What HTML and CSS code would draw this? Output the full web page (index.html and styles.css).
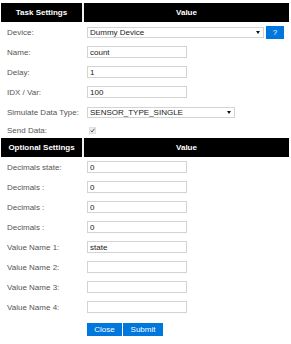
FILE: index.html
```html
<!DOCTYPE html>
<html lang="en">
<head>
    <meta charset="UTF-8">
    <meta name="viewport" content="width=device-width, initial-scale=1.0">
    <title>Task Settings</title>
    <link rel="stylesheet" href="styles.css">
</head>
<body>
    <form class="task-form">
        <table class="settings">
            <colgroup>
                <col class="col-label">
                <col>
            </colgroup>
            <tr>
                <th>Task Settings</th>
                <th>Value</th>
            </tr>
            <tr>
                <td>Device:</td>
                <td>
                    <div class="device-row">
                        <span class="select-wrap device-select">
                            <select name="device">
                                <option>Dummy Device</option>
                            </select>
                        </span>
                        <a class="help-btn" href="#">?</a>
                    </div>
                </td>
            </tr>
            <tr>
                <td>Name:</td>
                <td><input type="text" name="name" value="count"></td>
            </tr>
            <tr>
                <td>Delay:</td>
                <td><input type="text" name="delay" value="1"></td>
            </tr>
            <tr>
                <td>IDX / Var:</td>
                <td><input type="text" name="idx" value="100"></td>
            </tr>
            <tr>
                <td>Simulate Data Type:</td>
                <td>
                    <span class="select-wrap type-select">
                        <select name="type">
                            <option>SENSOR_TYPE_SINGLE</option>
                        </select>
                    </span>
                </td>
            </tr>
            <tr class="check-row">
                <td>Send Data:</td>
                <td><span class="check-box"><svg width="5" height="5" viewBox="0 0 5 5"><path d="M0.6 2.6 L2 4 L4.4 0.8" fill="none" stroke="#555" stroke-width="1"/></svg></span></td>
            </tr>
            <tr>
                <th>Optional Settings</th>
                <th>Value</th>
            </tr>
            <tr>
                <td>Decimals state:</td>
                <td><input type="text" value="0"></td>
            </tr>
            <tr>
                <td>Decimals :</td>
                <td><input type="text" value="0"></td>
            </tr>
            <tr>
                <td>Decimals :</td>
                <td><input type="text" value="0"></td>
            </tr>
            <tr>
                <td>Decimals :</td>
                <td><input type="text" value="0"></td>
            </tr>
            <tr>
                <td>Value Name 1:</td>
                <td><input type="text" value="state"></td>
            </tr>
            <tr>
                <td>Value Name 2:</td>
                <td><input type="text" value=""></td>
            </tr>
            <tr>
                <td>Value Name 3:</td>
                <td><input type="text" value=""></td>
            </tr>
            <tr>
                <td>Value Name 4:</td>
                <td><input type="text" value=""></td>
            </tr>
            <tr class="button-row">
                <td></td>
                <td>
                    <a class="button button-close" href="#">Close</a><button type="button" class="button button-submit">Submit</button>
                </td>
            </tr>
        </table>
    </form>
</body>
</html>
```

FILE: styles.css
```css
:root {
    --text-color: #555;
    --border-color: #d3d3d3;
    --button-color: #0077dd;
}

body {
    font-family: 'Liberation Sans', Arial, sans-serif;
    font-size: 8px;
    color: var(--text-color);
    margin: 0;
    background-color: white;
}

.task-form {
    margin: 3px 0 0 1px;
}

.settings {
    width: 288px;
    border-collapse: collapse;
    table-layout: fixed;
}

.col-label {
    width: 82px;
}

th {
    height: 19px;
    padding: 0;
    background-color: #000;
    color: white;
    font-weight: bold;
    font-size: 8px;
    text-align: center;
}

th + th {
    border-left: 2px solid #f0f0f0;
}

td {
    height: 20px;
    padding: 0 0 0 4px;
    vertical-align: middle;
}

td:first-child {
    padding-left: 6px;
}

input[type="text"] {
    box-sizing: border-box;
    width: 100px;
    height: 12px;
    margin: 0;
    padding: 0 2px;
    border: 1px solid var(--border-color);
    font-family: inherit;
    font-size: 8px;
    color: #222;
    display: block;
}

.device-row {
    display: flex;
    align-items: center;
    gap: 2px;
}

.select-wrap {
    position: relative;
    display: block;
}

.select-wrap select {
    appearance: none;
    box-sizing: border-box;
    width: 100%;
    height: 11px;
    margin: 0;
    padding: 0 2px;
    border: 1px solid var(--border-color);
    background-color: white;
    font-family: inherit;
    font-size: 8px;
    line-height: 9px;
    color: #222;
    display: block;
}

.select-wrap::after {
    content: "";
    position: absolute;
    right: 4px;
    top: 4px;
    border-left: 2px solid transparent;
    border-right: 2px solid transparent;
    border-top: 3px solid #111;
}

.device-select {
    width: 177px;
}

.type-select {
    width: 148px;
}

.help-btn {
    width: 18px;
    height: 13px;
    line-height: 13px;
    text-align: center;
    background-color: var(--button-color);
    color: white;
    text-decoration: none;
    font-size: 8px;
}

.check-row td {
    height: 16px;
}

.check-box {
    box-sizing: border-box;
    width: 7px;
    height: 7px;
    margin-left: 2px;
    background-color: #ececec;
    border: 1px solid #e0e0e0;
    display: flex;
    align-items: center;
    justify-content: center;
}

.button-row td {
    height: 19px;
    padding-top: 6px;
    vertical-align: top;
}

.button {
    display: inline-block;
    box-sizing: border-box;
    height: 13px;
    line-height: 13px;
    padding: 0;
    margin: 0 1px 0 0;
    border: none;
    background-color: var(--button-color);
    color: white;
    font-family: inherit;
    font-size: 8px;
    text-align: center;
    text-decoration: none;
    vertical-align: top;
    cursor: pointer;
}

.button-close {
    width: 35px;
}

.button-submit {
    width: 40px;
}
```
